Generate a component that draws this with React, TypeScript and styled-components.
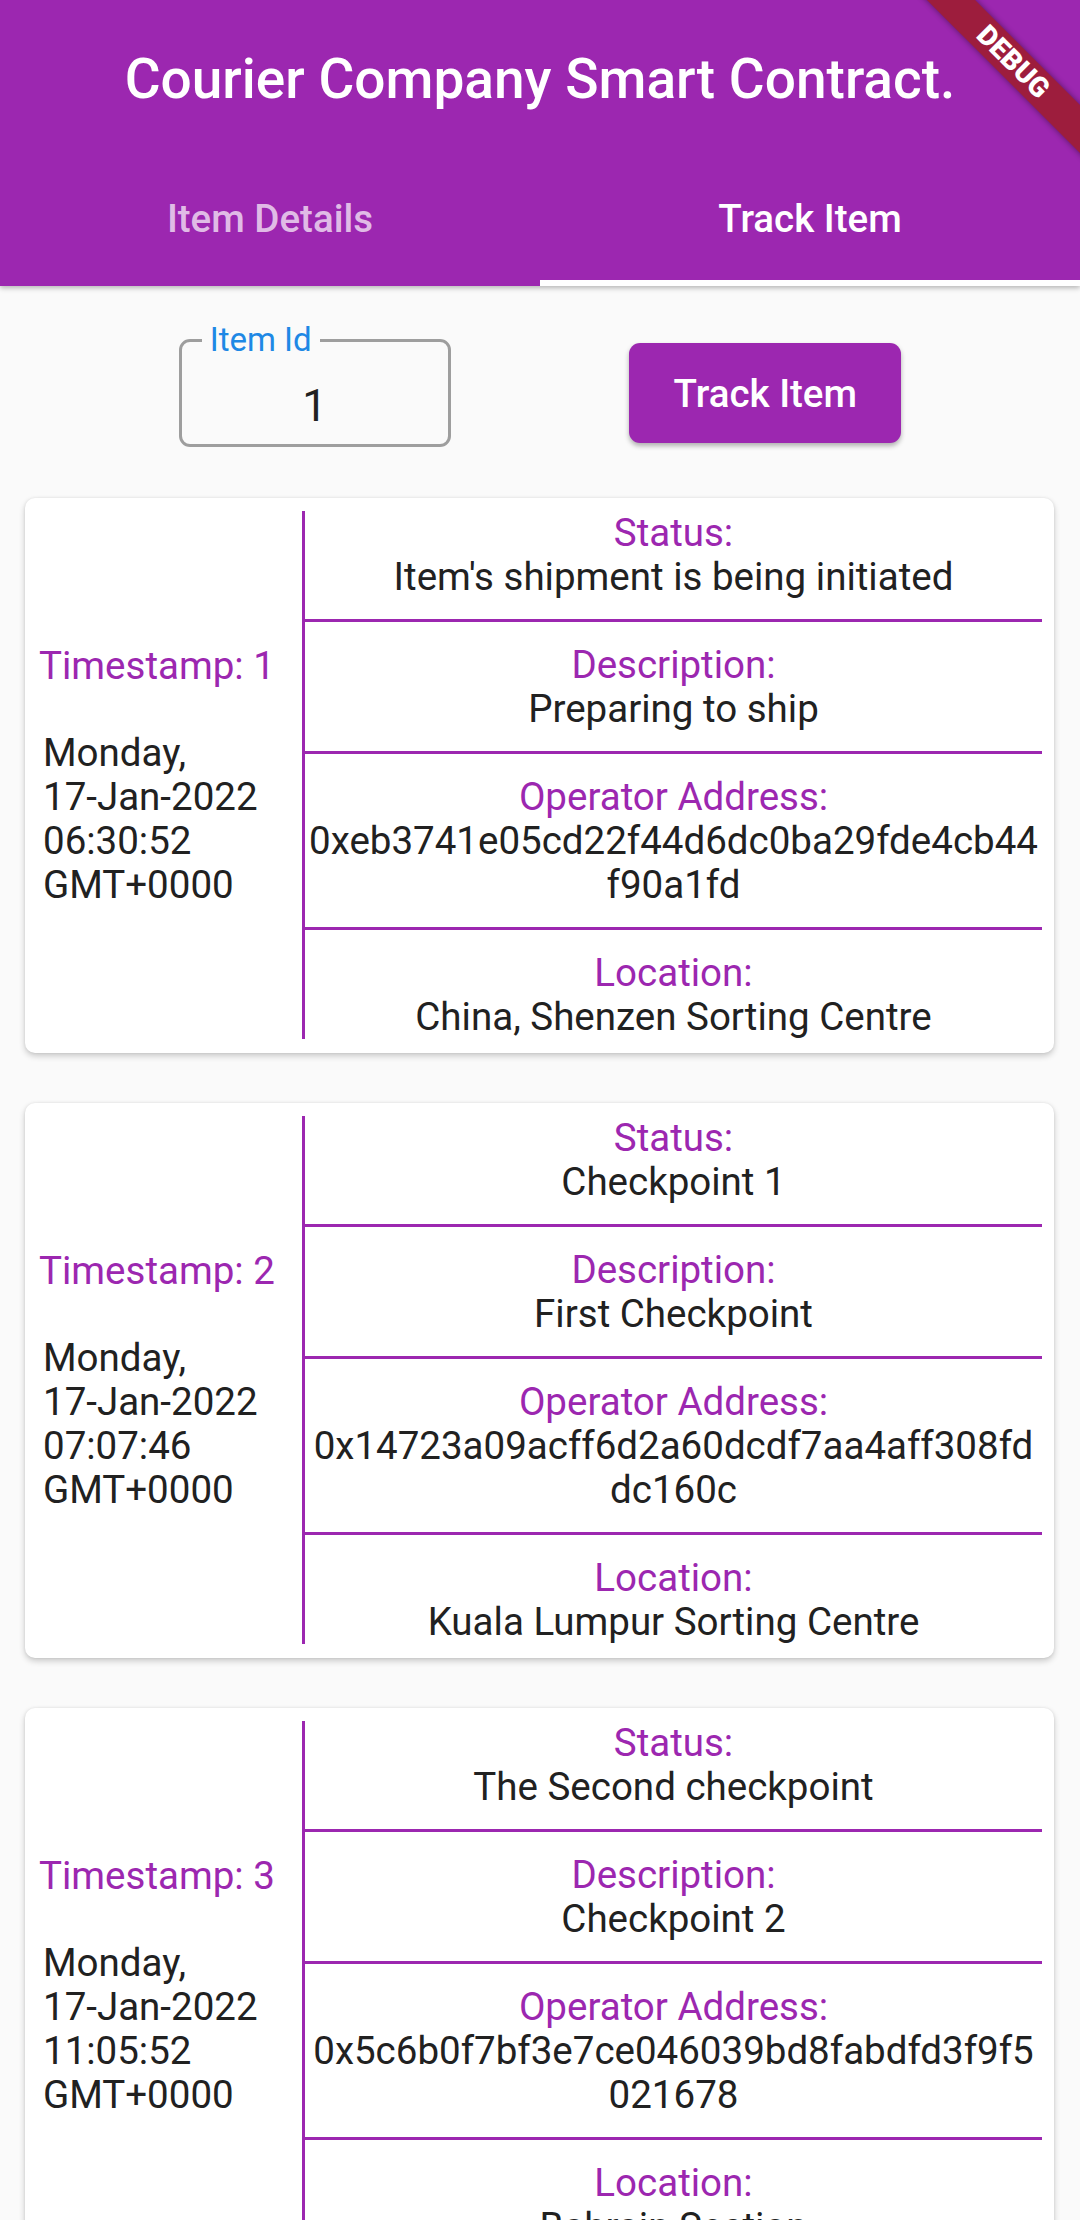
import React from "react";
import styled, { createGlobalStyle } from "styled-components";

const PURPLE = "#9c27b0";
const INK = "#212121";

const GlobalStyle = createGlobalStyle`
  html, body {
    margin: 0;
    padding: 0;
    overflow: hidden;
    background: #fafafa;
  }
  * {
    box-sizing: border-box;
  }
`;

const Page = styled.div`
  position: relative;
  width: 1080px;
  height: 100vh;
  overflow: hidden;
  background: #fafafa;
  font-family: Roboto, "Noto Sans", sans-serif;
`;

const AppBar = styled.header`
  position: relative;
  z-index: 1;
  background: ${PURPLE};
  box-shadow: 0 2px 5px rgba(0, 0, 0, 0.28);
`;

const Toolbar = styled.div`
  height: 157px;
  display: flex;
  align-items: center;
  justify-content: center;
  color: #ffffff;
  font-size: 55px;
  font-weight: 500;
`;

const Tabs = styled.nav`
  display: flex;
  height: 129px;
`;

const Tab = styled.div<{ $active?: boolean }>`
  flex: 1;
  display: flex;
  align-items: center;
  justify-content: center;
  font-size: 38.5px;
  font-weight: 500;
  color: ${(p) => (p.$active ? "#ffffff" : "rgba(255, 255, 255, 0.7)")};
  border-bottom: 6px solid ${(p) => (p.$active ? "#ffffff" : "transparent")};
`;

const DebugBanner = styled.div`
  position: absolute;
  z-index: 5;
  top: 45px;
  left: 883px;
  width: 260px;
  height: 34px;
  display: flex;
  align-items: center;
  justify-content: center;
  background: #9d1d3d;
  color: #ffffff;
  font-size: 28px;
  font-weight: 900;
  line-height: 1;
  transform: rotate(45deg);
  box-shadow: 0 0 6px rgba(0, 0, 0, 0.45);
`;

const InputRow = styled.div`
  display: flex;
  justify-content: space-evenly;
  align-items: center;
  margin: 53px 0 51px;
`;

const FieldBox = styled.div`
  position: relative;
  width: 272px;
  height: 108px;
  border: 3px solid #9e9e9e;
  border-radius: 11px;
  padding-top: 38px;
  text-align: center;
  font-size: 44px;
  line-height: 53px;
  color: ${INK};
`;

const FieldLabel = styled.span`
  position: absolute;
  top: -19px;
  left: 20px;
  padding: 0 8px;
  background: #fafafa;
  color: #1e88e5;
  font-size: 33px;
  line-height: 34px;
`;

const TrackButton = styled.button`
  width: 272px;
  height: 100px;
  border: none;
  border-radius: 11px;
  background: ${PURPLE};
  color: #ffffff;
  font-family: Roboto, "Noto Sans", sans-serif;
  font-size: 38.5px;
  font-weight: 500;
  box-shadow: 0 3px 5px rgba(0, 0, 0, 0.3);
`;

const CardList = styled.div`
  display: flex;
  flex-direction: column;
  gap: 50px;
  padding: 0 26px 0 25px;
`;

const Card = styled.section`
  display: flex;
  background: #ffffff;
  border-radius: 10px;
  padding: 13px 12px 14px 14px;
  box-shadow: 0 3px 6px rgba(0, 0, 0, 0.2), 0 0 3px rgba(0, 0, 0, 0.08);
`;

const LeftCol = styled.div`
  width: 263px;
  flex-shrink: 0;
  display: flex;
  flex-direction: column;
  justify-content: center;
  font-size: 38.5px;
  line-height: 44px;
`;

const StampLabel = styled.div`
  color: ${PURPLE};
  margin-bottom: 43px;
`;

const StampDate = styled.div`
  color: ${INK};
  padding-left: 4px;
`;

const DateWord = styled.span`
  white-space: nowrap;
`;

const VRule = styled.div`
  width: 3px;
  flex-shrink: 0;
  background: ${PURPLE};
`;

const RightCol = styled.div`
  flex: 1;
  display: flex;
  flex-direction: column;
  text-align: center;
  font-size: 38.5px;
  line-height: 44px;
`;

const FieldName = styled.div`
  color: ${PURPLE};
`;

const FieldValue = styled.div<{ $breakAll?: boolean }>`
  color: ${INK};
  word-break: ${(p) => (p.$breakAll ? "break-all" : "normal")};
`;

const HRule = styled.div`
  height: 3px;
  margin: 20px 0 21px;
  background: ${PURPLE};
`;

type Checkpoint = {
  id: number;
  date: string;
  status: string;
  description: string;
  operator: string;
  location: string;
};

const checkpoints: Checkpoint[] = [
  {
    id: 1,
    date: "Monday, 17-Jan-2022 06:30:52 GMT+0000",
    status: "Item's shipment is being initiated",
    description: "Preparing to ship",
    operator: "0xeb3741e05cd22f44d6dc0ba29fde4cb44f90a1fd",
    location: "China, Shenzen Sorting Centre",
  },
  {
    id: 2,
    date: "Monday, 17-Jan-2022 07:07:46 GMT+0000",
    status: "Checkpoint 1",
    description: "First Checkpoint",
    operator: "0x14723a09acff6d2a60dcdf7aa4aff308fddc160c",
    location: "Kuala Lumpur Sorting Centre",
  },
  {
    id: 3,
    date: "Monday, 17-Jan-2022 11:05:52 GMT+0000",
    status: "The Second checkpoint",
    description: "Checkpoint 2",
    operator: "0x5c6b0f7bf3e7ce046039bd8fabdfd3f9f5021678",
    location: "Bahrain Section",
  },
];

const CheckpointCard: React.FC<{ item: Checkpoint }> = ({ item }) => (
  <Card>
    <LeftCol>
      <StampLabel>Timestamp: {item.id}</StampLabel>
      <StampDate>
        {item.date.split(" ").map((word, i) => (
          <React.Fragment key={i}>
            {i > 0 && " "}
            <DateWord>{word}</DateWord>
          </React.Fragment>
        ))}
      </StampDate>
    </LeftCol>
    <VRule />
    <RightCol>
      <FieldName>Status:</FieldName>
      <FieldValue>{item.status}</FieldValue>
      <HRule />
      <FieldName>Description:</FieldName>
      <FieldValue>{item.description}</FieldValue>
      <HRule />
      <FieldName>Operator Address:</FieldName>
      <FieldValue $breakAll>{item.operator}</FieldValue>
      <HRule />
      <FieldName>Location:</FieldName>
      <FieldValue>{item.location}</FieldValue>
    </RightCol>
  </Card>
);

const App: React.FC = () => {
  return (
    <Page>
      <GlobalStyle />
      <AppBar>
        <Toolbar>Courier Company Smart Contract.</Toolbar>
        <Tabs>
          <Tab>Item Details</Tab>
          <Tab $active>Track Item</Tab>
        </Tabs>
      </AppBar>
      <DebugBanner>DEBUG</DebugBanner>

      <InputRow>
        <FieldBox>
          <FieldLabel>Item Id</FieldLabel>1
        </FieldBox>
        <TrackButton>Track Item</TrackButton>
      </InputRow>

      <CardList>
        {checkpoints.map((item) => (
          <CheckpointCard key={item.id} item={item} />
        ))}
      </CardList>
    </Page>
  );
};

export default App;
